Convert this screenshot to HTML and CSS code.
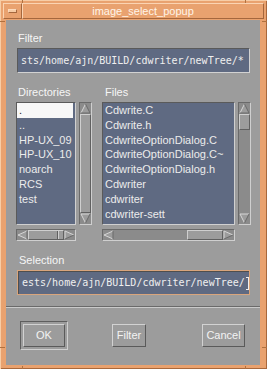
FILE: index.html
```html
<!DOCTYPE html>
<html>
<head>
<meta charset="utf-8">
<link rel="stylesheet" href="styles.css">
</head>
<body>
<div class="window">
  <span class="mark mark-t1"></span><span class="mark mark-t2"></span>
  <span class="mark mark-b1"></span><span class="mark mark-b2"></span>
  <span class="mark mark-l1"></span><span class="mark mark-l2"></span>
  <span class="mark mark-r1"></span><span class="mark mark-r2"></span>
  <div class="titlebar">
    <div class="menu-btn"><span class="dash"></span></div>
    <div class="title">image_select_popup</div>
  </div>
  <div class="client">
    <div class="label top-label">Filter</div>
    <div class="field">sts/home/ajn/BUILD/cdwriter/newTree/*</div>
    <div class="lists">
      <div class="label dir-label">Directories</div>
      <div class="label files-label">Files</div>
      <div class="list dir-list">
        <div class="item sel">.</div>
        <div class="item">..</div>
        <div class="item">HP-UX_09</div>
        <div class="item">HP-UX_10</div>
        <div class="item">noarch</div>
        <div class="item">RCS</div>
        <div class="item">test</div>
      </div>
      <div class="vsb dir-vsb">
        <svg class="arrow" width="11" height="11" viewBox="0 0 11 11"><polygon points="5.5,1 10,10 1,10" fill="#9c9c9c"/><polyline points="1,10 5.5,1" stroke="#d6d6d6" fill="none"/><polyline points="5.5,1 10,10 1,10" stroke="#6a6a6a" fill="none"/></svg>
        <div class="slider grow"></div>
        <svg class="arrow" width="11" height="11" viewBox="0 0 11 11"><polygon points="1,1 10,1 5.5,10" fill="#9c9c9c"/><polyline points="5.5,10 1,1 10,1" stroke="#d6d6d6" fill="none"/><polyline points="10,1 5.5,10" stroke="#6a6a6a" fill="none"/></svg>
      </div>
      <div class="list file-list">
        <div class="item">Cdwrite.C</div>
        <div class="item">Cdwrite.h</div>
        <div class="item">CdwriteOptionDialog.C</div>
        <div class="item">CdwriteOptionDialog.C~</div>
        <div class="item">CdwriteOptionDialog.h</div>
        <div class="item">Cdwriter</div>
        <div class="item">cdwriter</div>
        <div class="item">cdwriter-sett</div>
      </div>
      <div class="vsb file-vsb">
        <svg class="arrow" width="11" height="11" viewBox="0 0 11 11"><polygon points="5.5,1 10,10 1,10" fill="#9c9c9c"/><polyline points="1,10 5.5,1" stroke="#d6d6d6" fill="none"/><polyline points="5.5,1 10,10 1,10" stroke="#6a6a6a" fill="none"/></svg>
        <div class="slider vslider"></div>
        <div class="grow"></div>
        <svg class="arrow" width="11" height="11" viewBox="0 0 11 11"><polygon points="1,1 10,1 5.5,10" fill="#9c9c9c"/><polyline points="5.5,10 1,1 10,1" stroke="#d6d6d6" fill="none"/><polyline points="10,1 5.5,10" stroke="#6a6a6a" fill="none"/></svg>
      </div>
      <div class="hsb dir-hsb">
        <svg class="arrow" width="11" height="10" viewBox="0 0 11 10"><polygon points="1,5 10,1 10,9" fill="#9c9c9c"/><polyline points="10,1 1,5 10,9" stroke="#d6d6d6" fill="none"/><polyline points="10,1 10,9" stroke="#6a6a6a" fill="none"/></svg>
        <div class="slider grow hslider-dir"><span class="notch"></span></div>
        <svg class="arrow" width="11" height="10" viewBox="0 0 11 10"><polygon points="1,1 10,5 1,9" fill="#9c9c9c"/><polyline points="1,9 1,1 10,5" stroke="#d6d6d6" fill="none"/><polyline points="10,5 1,9" stroke="#6a6a6a" fill="none"/></svg>
      </div>
      <div class="hsb file-hsb">
        <svg class="arrow" width="11" height="10" viewBox="0 0 11 10"><polygon points="1,5 10,1 10,9" fill="#9c9c9c"/><polyline points="10,1 1,5 10,9" stroke="#d6d6d6" fill="none"/><polyline points="10,1 10,9" stroke="#6a6a6a" fill="none"/></svg>
        <div class="grow"></div>
        <div class="slider hslider"></div>
        <svg class="arrow" width="11" height="10" viewBox="0 0 11 10"><polygon points="1,1 10,5 1,9" fill="#9c9c9c"/><polyline points="1,9 1,1 10,5" stroke="#d6d6d6" fill="none"/><polyline points="10,5 1,9" stroke="#6a6a6a" fill="none"/></svg>
      </div>
    </div>
    <div class="label sel-label">Selection</div>
    <div class="field focus">ests/home/ajn/BUILD/cdwriter/newTree/<span class="ibeam"></span></div>
    <div class="sep"></div>
    <div class="buttons">
      <div class="default-frame"><div class="btn btn-ok">OK</div></div>
      <div class="btn btn-filter">Filter</div>
      <div class="btn btn-cancel">Cancel</div>
    </div>
  </div>
</div>
</body>
</html>
```

FILE: styles.css
```css
body {
  margin: 0;
  background: #ffffff;
}

.window {
  position: relative;
  width: 267px;
  height: 369px;
  box-sizing: border-box;
  padding: 3px;
  background: #e9a26f;
  box-shadow: inset 1px 1px 0 #f7cda6, inset -1px -1px 0 #a8683c;
  display: flex;
  flex-direction: column;
  font-family: "Liberation Sans", Arial, sans-serif;
  font-size: 11px;
}

.mark {
  position: absolute;
  background: #b0713f;
}
.mark-t1 { left: 22px; top: 0; width: 1px; height: 3px; }
.mark-t2 { left: 245px; top: 0; width: 1px; height: 3px; }
.mark-b1 { left: 22px; bottom: 0; width: 1px; height: 3px; }
.mark-b2 { left: 245px; bottom: 0; width: 1px; height: 3px; }
.mark-l1 { left: 0; top: 21px; width: 5px; height: 1px; }
.mark-l2 { left: 0; top: 347px; width: 5px; height: 1px; }
.mark-r1 { right: 0; top: 21px; width: 5px; height: 1px; }
.mark-r2 { right: 0; top: 347px; width: 5px; height: 1px; }

.titlebar {
  display: flex;
  height: 16px;
  margin-bottom: 1px;
}

.menu-btn {
  width: 19px;
  box-sizing: border-box;
  border: 1px solid;
  border-color: #fbd4b2 #a5673d #a5673d #fbd4b2;
  display: flex;
  align-items: center;
  justify-content: center;
}

.dash {
  width: 7px;
  height: 2px;
  background: #f7cba4;
  border: 1px solid;
  border-color: #fbd9bb #a5673d #a5673d #fbd9bb;
}

.title {
  flex: 1;
  border: 1px solid;
  border-color: #fbd4b2 #a5673d #a5673d #fbd4b2;
  color: #fff4e8;
  text-align: center;
  line-height: 14px;
}

.client {
  flex: 1;
  margin: 0 4px 1px 3px;
  background: #9c9c9c;
  padding: 0 9px 0 10px;
  display: flex;
  flex-direction: column;
  color: #f6f6f6;
}

.label {
  height: 13px;
  line-height: 13px;
  white-space: nowrap;
}

.top-label {
  margin-top: 12px;
  padding-left: 2px;
}

.sel-label {
  margin-top: 13px;
  padding-left: 3px;
}

.field {
  margin: 3px 1px 0;
  height: 25px;
  box-sizing: border-box;
  background: #5f6a82;
  border: 1px solid;
  border-color: #5a5a5a #d2d2d2 #d2d2d2 #5a5a5a;
  font-family: "DejaVu Sans Mono", "Liberation Mono", monospace;
  font-size: 10px;
  line-height: 23px;
  padding-left: 3px;
  color: #efefef;
  white-space: nowrap;
  overflow: hidden;
}

.field.focus {
  border-color: #d9a57c;
  box-shadow: inset 1px 1px 0 #4e4e4e;
  padding-left: 4px;
}

.ibeam {
  display: inline-block;
  vertical-align: middle;
  width: 5px;
  height: 13px;
  margin-left: 1px;
  box-sizing: border-box;
  border-top: 1px solid #f0f0f0;
  border-bottom: 1px solid #f0f0f0;
  background: linear-gradient(#f0f0f0, #f0f0f0) center / 1px 100% no-repeat;
}

.lists {
  margin-top: 13px;
  display: grid;
  grid-template-columns: 60px 3px 13px 10px 133px 3px 13px;
  grid-template-rows: 13px 3px 123px 4px 12px;
}

.dir-label { grid-column: 1 / 4; grid-row: 1; padding-left: 2px; }
.files-label { grid-column: 5 / 8; grid-row: 1; padding-left: 3px; }
.dir-list { grid-column: 1; grid-row: 3; }
.dir-vsb { grid-column: 3; grid-row: 3; }
.file-list { grid-column: 5; grid-row: 3; }
.file-vsb { grid-column: 7; grid-row: 3; }
.dir-hsb { grid-column: 1; grid-row: 5; }
.file-hsb { grid-column: 5; grid-row: 5; }

.list {
  background: #5f6a82;
  border: 1px solid;
  border-color: #5a5a5a #d0d0d0 #d0d0d0 #5a5a5a;
  overflow: hidden;
  color: #ececec;
}

.item {
  height: 14.8px;
  line-height: 14.8px;
  padding-left: 2px;
  white-space: nowrap;
}

.item.sel {
  background: #f7f7f7;
  color: #222222;
  margin-right: 2px;
}

.vsb,
.hsb {
  display: flex;
  background: #8b8b8b;
  border: 1px solid;
  border-color: #6a6a6a #cfcfcf #cfcfcf #6a6a6a;
}

.vsb { flex-direction: column; }
.hsb { flex-direction: row; }

.arrow {
  display: block;
  flex: none;
}

.grow { flex: 1; }

.slider {
  background: #9c9c9c;
  border: 1px solid;
  border-color: #cfcfcf #606060 #606060 #cfcfcf;
  box-sizing: border-box;
}

.vslider { height: 16px; flex: none; }
.hslider { width: 36px; flex: none; }

.hslider-dir {
  display: flex;
  justify-content: flex-end;
}

.notch {
  width: 5px;
  border-left: 1px solid #606060;
  box-shadow: inset 1px 0 0 #cfcfcf;
}

.sep {
  margin: 11px -9px 0 -10px;
  border-top: 1px solid #6a6a6a;
  border-bottom: 1px solid #cacaca;
}

.buttons {
  margin-top: 13px;
  display: flex;
  align-items: center;
}

.default-frame {
  margin-left: 4px;
  padding: 2px;
  border: 1px solid;
  border-color: #5e5e5e #cfcfcf #cfcfcf #5e5e5e;
}

.btn {
  height: 23px;
  box-sizing: border-box;
  border: 1px solid;
  border-color: #d2d2d2 #5a5a5a #5a5a5a #d2d2d2;
  line-height: 21px;
  text-align: center;
  color: #f3f3f3;
}

.btn-ok { width: 42px; }
.btn-filter { width: 34px; margin-left: 44px; }
.btn-cancel { width: 43px; margin-left: 56px; }
```
